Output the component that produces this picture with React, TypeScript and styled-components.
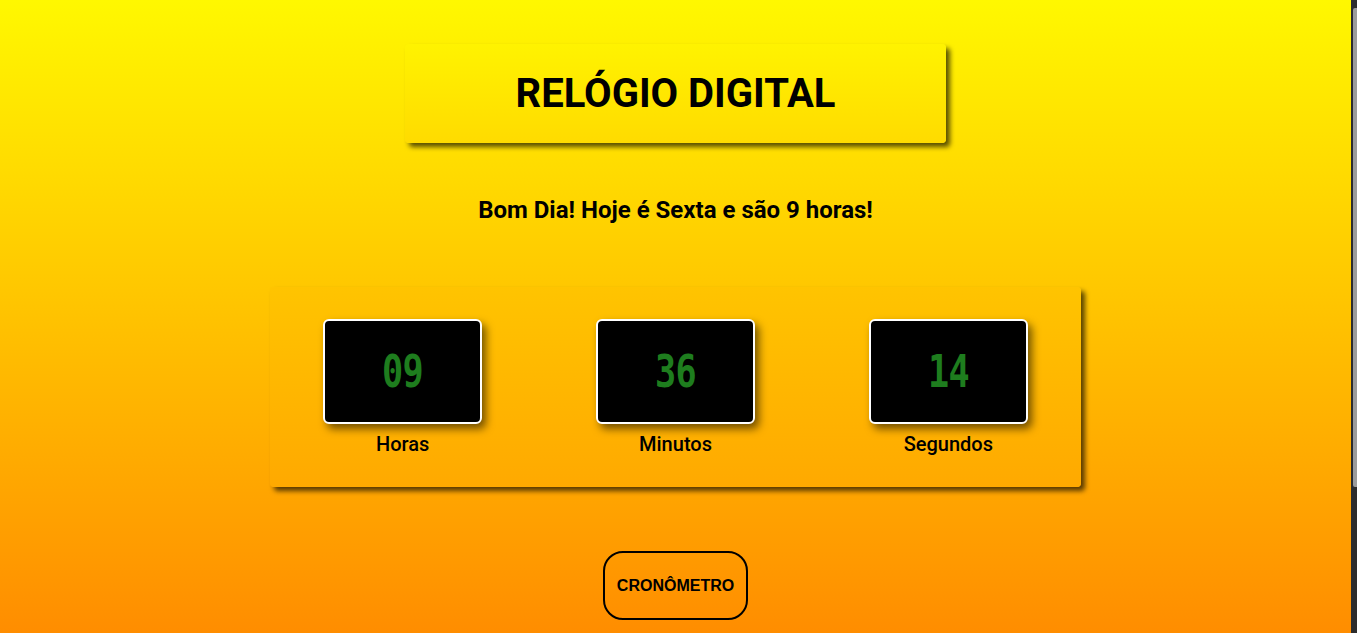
import React from "react";
import styled, { createGlobalStyle } from "styled-components";

const Global = createGlobalStyle`
  html, body { margin: 0; padding: 0; overflow: hidden; }
  body { font-family: Roboto, "Noto Sans", Arial, sans-serif; color: #000; }
`;

const Page = styled.main`
  box-sizing: border-box;
  height: 100vh;
  min-height: 633px;
  padding: 44px 6px 0 0;
  display: flex;
  flex-direction: column;
  align-items: center;
  background: linear-gradient(to bottom, #fff800 0%, #ff8d00 100%);
`;

const ScrollTrack = styled.div`
  position: fixed;
  top: 0;
  right: 0;
  width: 6px;
  height: 100%;
  background: #2c2c2c;
`;

const ScrollThumb = styled.div`
  position: absolute;
  top: 8px;
  left: 2px;
  right: 0;
  height: 479px;
  background: #9c9c9c;
  border-radius: 2px 0 0 2px;
`;

const TitleBox = styled.header`
  width: 40%;
  height: 99px;
  display: flex;
  align-items: center;
  justify-content: center;
  border-radius: 4px;
  background: linear-gradient(to bottom, #fff300, #ffdb00);
  box-shadow: 4px 4px 5px rgba(0, 0, 0, 0.65);
`;

const Title = styled.h1`
  margin: 0;
  font-size: 40px;
  font-weight: 700;
`;

const Greeting = styled.p`
  margin: 53px 0 0;
  font-size: 24px;
  font-weight: 700;
`;

const Panel = styled.section`
  box-sizing: border-box;
  width: 60%;
  height: 200px;
  margin-top: 63px;
  padding: 32px 53px 0;
  display: flex;
  justify-content: space-between;
  border-radius: 4px;
  background: linear-gradient(to bottom, #ffc400, #ffa900);
  box-shadow: 4px 4px 5px rgba(0, 0, 0, 0.65);
`;

const Unit = styled.div`
  width: 159px;
  display: flex;
  flex-direction: column;
  align-items: center;
`;

const Screen = styled.div`
  box-sizing: border-box;
  width: 159px;
  height: 105px;
  display: flex;
  align-items: center;
  justify-content: center;
  background: #000;
  border: 2px solid #fff;
  border-radius: 6px;
  box-shadow: 4px 5px 8px rgba(0, 0, 0, 0.55);
`;

const Digits = styled.span`
  font-family: "DejaVu Sans Mono", "Liberation Mono", monospace;
  font-size: 44px;
  font-weight: 700;
  color: #1e7d1e;
  letter-spacing: -1px;
  transform: scaleX(0.8);
  line-height: 1;
`;

const Label = styled.span`
  margin-top: 8px;
  font-size: 20px;
  font-weight: 500;
`;

const Button = styled.button`
  margin-top: 64px;
  box-sizing: border-box;
  width: 145px;
  height: 69px;
  background: transparent;
  border: 2px solid #000;
  border-radius: 20px;
  font-family: "Liberation Sans", Arial, sans-serif;
  font-size: 16px;
  font-weight: 700;
  color: #000;
  cursor: pointer;
`;

const units = [
  { value: "09", label: "Horas" },
  { value: "36", label: "Minutos" },
  { value: "14", label: "Segundos" },
];

export default function App() {
  return (
    <>
      <Global />
      <Page>
        <TitleBox>
          <Title>RELÓGIO DIGITAL</Title>
        </TitleBox>
        <Greeting>Bom Dia! Hoje é Sexta e são 9 horas!</Greeting>
        <Panel>
          {units.map((u) => (
            <Unit key={u.label}>
              <Screen>
                <Digits>{u.value}</Digits>
              </Screen>
              <Label>{u.label}</Label>
            </Unit>
          ))}
        </Panel>
        <Button>CRONÔMETRO</Button>
      </Page>
      <ScrollTrack>
        <ScrollThumb />
      </ScrollTrack>
    </>
  );
}
